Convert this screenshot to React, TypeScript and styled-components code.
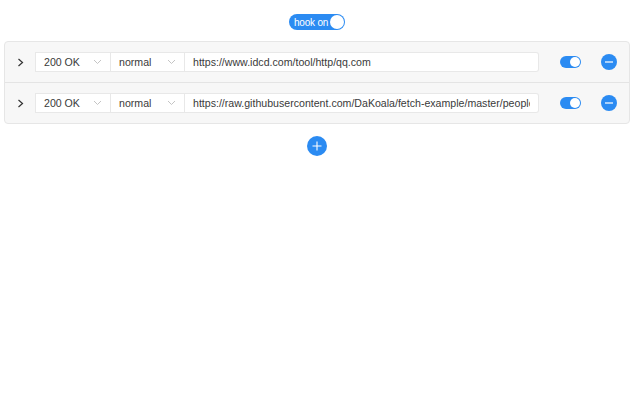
import React from "react";
import styled, { createGlobalStyle } from "styled-components";

const Global = createGlobalStyle`
  html, body { margin: 0; padding: 0; background: #fff; }
  body { font-family: "Liberation Sans", Arial, sans-serif; color: #333; }
`;

const BLUE = "#2b8bf2";

const Page = styled.div`
  width: 634px;
  display: flex;
  flex-direction: column;
  align-items: center;
  padding-top: 14px;
`;

const HookSwitch = styled.div`
  width: 56px;
  height: 16px;
  border-radius: 8px;
  background: ${BLUE};
  display: flex;
  align-items: center;
  justify-content: space-between;
  padding: 0 1px 0 5px;
  box-sizing: border-box;
  color: #fff;
  font-size: 10px;
  letter-spacing: -0.2px;
`;

const Knob = styled.span<{ $size: number }>`
  width: ${(p) => p.$size}px;
  height: ${(p) => p.$size}px;
  border-radius: 50%;
  background: #fff;
  flex: none;
`;

const Box = styled.div`
  align-self: stretch;
  margin: 11px 4px 0 4px;
  border: 1px solid #e6e6e6;
  border-radius: 4px;
  background: #f7f7f7;
`;

const Row = styled.div<{ $first?: boolean }>`
  height: 40px;
  display: flex;
  align-items: center;
  border-top: ${(p) => (p.$first ? "none" : "1px solid #e4e4e4")};
`;

const Chevron = styled.div`
  width: 29px;
  display: flex;
  justify-content: center;
  padding-left: 1px;
  color: #333;
`;

const Field = styled.div<{ $w: number; $first?: boolean; $last?: boolean }>`
  width: ${(p) => p.$w}px;
  height: 20px;
  box-sizing: border-box;
  background: #fff;
  border: 1px solid #e8e8e8;
  border-left: ${(p) => (p.$first ? "1px solid #e8e8e8" : "none")};
  border-radius: ${(p) => (p.$last ? "0 3px 3px 0" : "0")};
  display: flex;
  align-items: center;
  justify-content: space-between;
  padding: 0 8px 0 8px;
  font-size: 10.6px;
  color: #3a3a3a;
  white-space: nowrap;
  overflow: hidden;
`;

const UrlText = styled.span`
  overflow: hidden;
  white-space: nowrap;
  flex: 1;
`;

const Arrow = styled.span`
  display: flex;
  color: #c4c4c4;
`;

const Toggle = styled.div`
  margin-left: 21px;
  width: 21px;
  height: 12px;
  border-radius: 6px;
  background: ${BLUE};
  display: flex;
  align-items: center;
  justify-content: flex-end;
  padding: 0 1px;
  box-sizing: border-box;
`;

const RoundBtn = styled.div<{ $size: number }>`
  width: ${(p) => p.$size}px;
  height: ${(p) => p.$size}px;
  border-radius: 50%;
  background: ${BLUE};
  display: flex;
  align-items: center;
  justify-content: center;
  flex: none;
`;

const Minus = styled(RoundBtn)`
  margin-left: 20px;
`;

const Plus = styled(RoundBtn)`
  margin-top: 12px;
`;

const ArrowIcon = () => (
  <svg width="9" height="6" viewBox="0 0 9 6">
    <path d="M1 1l3.5 3.5L8 1" fill="none" stroke="currentColor" strokeWidth="1" />
  </svg>
);

const rows = [
  "https://www.idcd.com/tool/http/qq.com",
  "https://raw.githubusercontent.com/DaKoala/fetch-example/master/people.json",
];

export default function App() {
  return (
    <>
      <Global />
      <Page>
        <HookSwitch>
          <span>hook on</span>
          <Knob $size={14} />
        </HookSwitch>
        <Box>
          {rows.map((url, i) => (
            <Row key={i} $first={i === 0}>
              <Chevron>
                <svg width="7" height="9" viewBox="0 0 7 9">
                  <path d="M1.5 1l4 3.5-4 3.5" fill="none" stroke="#333" strokeWidth="1.2" />
                </svg>
              </Chevron>
              <Field $w={76} $first>
                <span>200 OK</span>
                <Arrow><ArrowIcon /></Arrow>
              </Field>
              <Field $w={74}>
                <span>normal</span>
                <Arrow><ArrowIcon /></Arrow>
              </Field>
              <Field $w={354} $last>
                <UrlText>{url}</UrlText>
              </Field>
              <Toggle>
                <Knob $size={10} />
              </Toggle>
              <Minus $size={16}>
                <svg width="10" height="2" viewBox="0 0 10 2">
                  <rect x="1" y="0.4" width="8" height="1.2" fill="#fff" />
                </svg>
              </Minus>
            </Row>
          ))}
        </Box>
        <Plus $size={20}>
          <svg width="10" height="10" viewBox="0 0 10 10">
            <path d="M5 0.5v9M0.5 5h9" stroke="#fff" strokeWidth="1.1" />
          </svg>
        </Plus>
      </Page>
    </>
  );
}
